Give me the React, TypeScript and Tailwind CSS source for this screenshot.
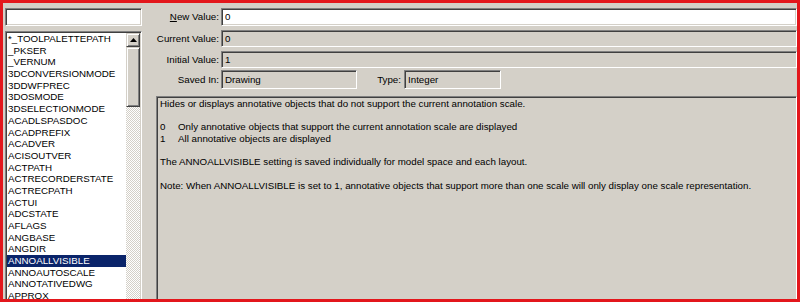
import React from "react";

const items = [
  "*_TOOLPALETTEPATH",
  "_PKSER",
  "_VERNUM",
  "3DCONVERSIONMODE",
  "3DDWFPREC",
  "3DOSMODE",
  "3DSELECTIONMODE",
  "ACADLSPASDOC",
  "ACADPREFIX",
  "ACADVER",
  "ACISOUTVER",
  "ACTPATH",
  "ACTRECORDERSTATE",
  "ACTRECPATH",
  "ACTUI",
  "ADCSTATE",
  "AFLAGS",
  "ANGBASE",
  "ANGDIR",
  "ANNOALLVISIBLE",
  "ANNOAUTOSCALE",
  "ANNOTATIVEDWG",
  "APPROX",
];

const sunken =
  "border border-t-[#808080] border-l-[#808080] border-b-white border-r-white shadow-[inset_1px_1px_0_#404040,inset_-1px_-1px_0_#d4d0c8]";
const raised =
  "border border-t-[#d4d0c8] border-l-[#d4d0c8] border-b-[#404040] border-r-[#404040] shadow-[inset_1px_1px_0_#ffffff,inset_-1px_-1px_0_#808080]";

export default function App() {
  return (
    <div className="w-[800px] h-[302px] border-[3px] border-[#e3171c] bg-[#d4d0c8] flex overflow-hidden font-['Liberation_Sans',Arial,sans-serif] text-[9.75px] text-black">
      {/* Left column */}
      <div className="w-[139px] shrink-0 flex flex-col pl-[2px] pt-[5px] gap-[5px] overflow-hidden">
        <div className={`h-[18px] w-[137px] shrink-0 bg-white ${sunken}`} />
        <div className={`h-[290px] w-[137px] shrink-0 bg-white flex ${sunken} p-[1px]`}>
          <div className="flex-1 flex flex-col overflow-hidden">
            {items.map((it) => (
              <div
                key={it}
                className={`h-[11.7px] leading-[11.7px] shrink-0 pl-[1px] whitespace-nowrap ${
                  it === "ANNOALLVISIBLE" ? "bg-[#0a246a] text-white" : ""
                }`}
              >
                {it}
              </div>
            ))}
          </div>
          <div className="w-[14px] shrink-0 flex flex-col">
            <div className={`h-[14px] shrink-0 bg-[#d4d0c8] flex items-center justify-center ${raised}`}>
              <svg width="7" height="4" viewBox="0 0 7 4">
                <path d="M3.5 0 L7 4 L0 4 Z" fill="#000" />
              </svg>
            </div>
            <div className={`h-[60px] shrink-0 bg-[#d4d0c8] ${raised}`} />
            <div className="flex-1 bg-[repeating-conic-gradient(#d4d0c8_0%_25%,#ffffff_0%_50%)] bg-size-[2px_2px]" />
          </div>
        </div>
      </div>

      {/* Right column */}
      <div className="flex-1 flex flex-col pt-[5px] overflow-hidden">
        <div className="flex h-[18px] shrink-0">
          <div className="w-[79px] shrink-0 text-right pr-[2px] leading-[18px]">
            <span className="underline">N</span>ew Value:
          </div>
          <div className={`flex-1 bg-white pl-[3px] leading-[16px] ${sunken}`}>0</div>
        </div>
        <div className="flex h-[17px] shrink-0 mt-[4px]">
          <div className="w-[79px] shrink-0 text-right pr-[2px] leading-[17px]">Current Value:</div>
          <div className={`flex-1 bg-[#d4d0c8] pl-[3px] leading-[15px] ${sunken}`}>0</div>
        </div>
        <div className="flex h-[17px] shrink-0 mt-[4px]">
          <div className="w-[79px] shrink-0 text-right pr-[2px] leading-[17px]">Initial Value:</div>
          <div className={`flex-1 bg-[#d4d0c8] pl-[3px] leading-[15px] ${sunken}`}>1</div>
        </div>
        <div className="flex h-[19px] shrink-0 mt-[2px]">
          <div className="w-[79px] shrink-0 text-right pr-[2px] leading-[19px]">Saved In:</div>
          <div className={`w-[136px] shrink-0 bg-[#d4d0c8] pl-[3px] leading-[17px] ${sunken}`}>Drawing</div>
          <div className="w-[47px] shrink-0 text-right pr-[3px] leading-[19px]">Type:</div>
          <div className={`w-[97px] shrink-0 bg-[#d4d0c8] pl-[3px] leading-[17px] ${sunken}`}>Integer</div>
        </div>
        <div className={`ml-[14px] mt-[7px] h-[220px] shrink-0 bg-[#d4d0c8] pl-[3px] pt-[1px] leading-[11.7px] ${sunken}`}>
          <div>Hides or displays annotative objects that do not support the current annotation scale.</div>
          <div className="h-[11.7px]" />
          <div className="flex">
            <span className="w-[18px] shrink-0">0</span>
            <span>Only annotative objects that support the current annotation scale are displayed</span>
          </div>
          <div className="flex">
            <span className="w-[18px] shrink-0">1</span>
            <span>All annotative objects are displayed</span>
          </div>
          <div className="h-[11.7px]" />
          <div>The ANNOALLVISIBLE setting is saved individually for model space and each layout.</div>
          <div className="h-[11.7px]" />
          <div>
            Note: When ANNOALLVISIBLE is set to 1, annotative objects that support more than one scale will only display one scale representation.
          </div>
        </div>
      </div>
    </div>
  );
}
